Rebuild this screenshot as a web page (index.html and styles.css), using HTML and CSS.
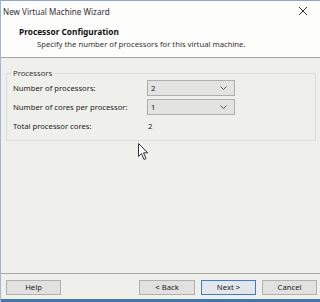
FILE: index.html
```html
<!DOCTYPE html>
<html>
<head>
  <meta charset="utf-8">
  <title>New Virtual Machine Wizard</title>
  <link rel="stylesheet" href="styles.css">
</head>
<body>
  <div class="window">
    <div class="titlebar">
      <span class="title">New Virtual Machine Wizard</span>
      <svg class="close" width="10" height="10" viewBox="0 0 10 10">
        <path d="M1 1 L9 9 M9 1 L1 9" stroke="#333" stroke-width="1" fill="none"/>
      </svg>
    </div>

    <div class="header">
      <h1>Processor Configuration</h1>
      <p>Specify the number of processors for this virtual machine.</p>
    </div>

    <div class="content">
      <fieldset class="group">
        <legend>Processors</legend>
        <div class="row">
          <span class="label">Number of processors:</span>
          <span class="select">
            <span class="value">2</span>
            <svg width="7" height="4" viewBox="0 0 7 4"><path d="M0.5 0.5 L3.5 3.5 L6.5 0.5" stroke="#555" fill="none"/></svg>
          </span>
        </div>
        <div class="row">
          <span class="label">Number of cores per processor:</span>
          <span class="select">
            <span class="value">1</span>
            <svg width="7" height="4" viewBox="0 0 7 4"><path d="M0.5 0.5 L3.5 3.5 L6.5 0.5" stroke="#555" fill="none"/></svg>
          </span>
        </div>
        <div class="row">
          <span class="label">Total processor cores:</span>
          <span class="total">2</span>
        </div>
      </fieldset>
    </div>

    <div class="footer">
      <button class="btn">Help</button>
      <span class="spacer"></span>
      <button class="btn back">&lt; Back</button>
      <button class="btn default">Next &gt;</button>
      <button class="btn">Cancel</button>
    </div>
    <div class="taskbar"></div>

    <svg class="cursor" width="12" height="18" viewBox="0 0 12 18">
      <path d="M0.5 0.5 L0.5 13.5 L3.5 10.5 L6 16.5 L8 15.5 L5.5 9.8 L9.8 9.8 Z" fill="#fff" stroke="#333" stroke-width="1"/>
    </svg>
  </div>
</body>
</html>
```

FILE: styles.css
```css
html, body {
  margin: 0;
  padding: 0;
}

* {
  box-sizing: border-box;
}

body {
  background: #f0f0ec;
  color: #222;
  font-family: "Noto Sans", "Open Sans", sans-serif;
  font-size: 7.7px;
}

.window {
  position: relative;
  width: 320px;
  height: 302px;
  display: flex;
  flex-direction: column;
  background: #efefeb;
  border-left: 1px solid #9db6d2;
}

.titlebar {
  height: 21px;
  background: #fdfdfb;
  border-top: 1px solid #8ea8c6;
  display: flex;
  align-items: center;
  justify-content: space-between;
  padding: 0 12px 0 2px;
  font-size: 8.1px;
  color: #333;
}

.close {
  display: block;
}

.header {
  height: 37px;
  background: #fdfdfb;
  border-bottom: 1px solid #a5a5a5;
  padding: 5px 0 0 18px;
}

.header h1 {
  margin: 0;
  font-size: 8.3px;
  font-weight: 700;
  color: #111;
  line-height: 12px;
}

.header p {
  margin: 0;
  padding-left: 18px;
  line-height: 12px;
  color: #333;
}

.content {
  flex: 1;
  padding: 10px 4px 0 5px;
}

.group {
  margin: 0;
  padding: 0 6px 6px 6px;
  border: 1px solid #dcdcd8;
  height: 73px;
}

.group legend {
  padding: 0 1px;
  margin-left: -1px;
  color: #333;
  line-height: 10px;
}

.row {
  display: flex;
  align-items: center;
  height: 19px;
}

.label {
  width: 134px;
  color: #222;
}

.select {
  width: 88px;
  height: 16px;
  background: #e3e3e1;
  border: 1px solid #aeaeac;
  display: flex;
  align-items: center;
  justify-content: space-between;
  padding: 0 7px 0 3px;
}

.total {
  padding-left: 1px;
}

.footer {
  height: 26px;
  border-top: 1px solid #a5a5a5;
  display: flex;
  align-items: center;
  gap: 6px;
  padding: 1px 3px 0 5px;
}

.spacer {
  flex: 1;
}

.btn {
  width: 55px;
  height: 15px;
  margin: 0;
  padding: 0;
  font-family: inherit;
  font-size: 7.7px;
  color: #222;
  background: #e1e1df;
  border: 1px solid #b0b0ae;
}

.btn.back {
  width: 56px;
}

.btn.default {
  border-color: #3a7fcf;
  background: #e3e6ea;
}

.taskbar {
  height: 3px;
  background: #3b78b8;
}

.cursor {
  position: absolute;
  left: 137px;
  top: 143px;
}
```
